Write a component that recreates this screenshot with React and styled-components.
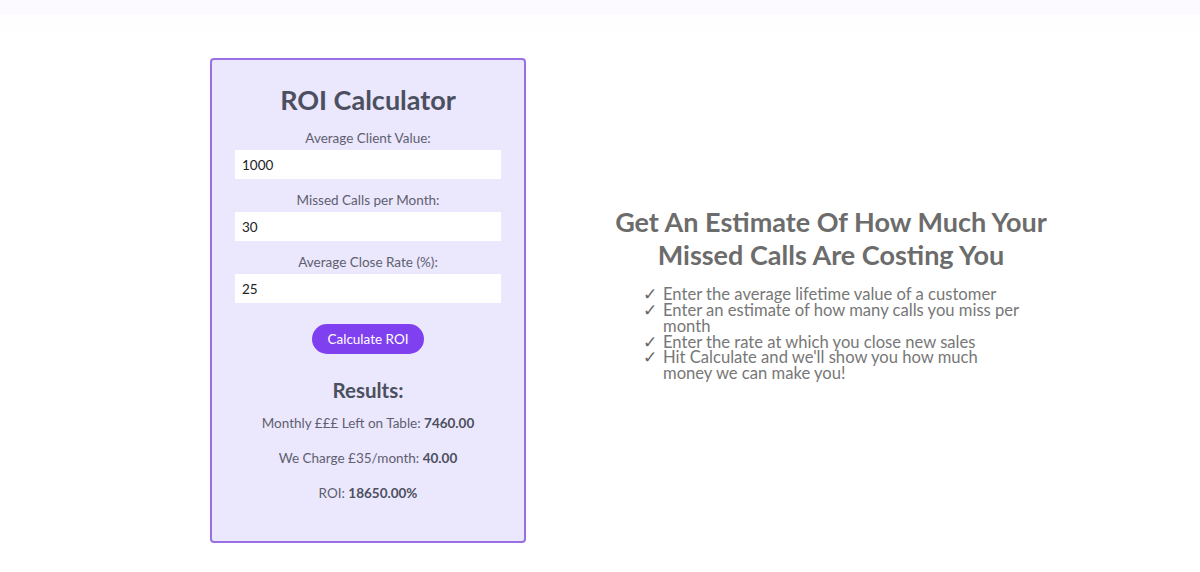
import React, { useState } from "react";
import styled, { createGlobalStyle } from "styled-components";

const GlobalStyle = createGlobalStyle`
  body {
    margin: 0;
    background: #ffffff;
    font-family: Lato, "Noto Sans", sans-serif;
  }
`;

const TopBar = styled.div`
  height: 15px;
  background: #fcfaff;
`;

const Strip = styled.div`
  height: 15px;
  background: #fdfefd;
`;

const Row = styled.div`
  display: flex;
  align-items: center;
  padding: 28px 0 0 210px;
`;

const Card = styled.div`
  width: 312px;
  box-sizing: content-box;
  border: 2px solid #9a6fe6;
  border-radius: 4px;
  background: #ebe7fc;
  padding: 24px 0 40px;
  display: flex;
  flex-direction: column;
  align-items: center;
`;

const Title = styled.h1`
  margin: 0 0 15px;
  font-size: 27px;
  line-height: 31px;
  font-weight: 700;
  color: #4b5060;
`;

const Label = styled.label`
  font-size: 13.5px;
  line-height: 16px;
  color: #5e6070;
  margin: ${(p) => (p.$first ? "0" : "13px")} 0 4px;
`;

const Input = styled.input`
  width: 266px;
  height: 29px;
  box-sizing: border-box;
  border: none;
  outline: none;
  background: #ffffff;
  padding: 0 7px;
  font-family: inherit;
  font-size: 13.5px;
  color: #222222;
`;

const Button = styled.button`
  margin-top: 21px;
  width: 112px;
  height: 30px;
  border: none;
  border-radius: 15px;
  background: #7f41ef;
  color: #ffffff;
  font-family: inherit;
  font-size: 13.5px;
  cursor: pointer;
`;

const ResultsTitle = styled.h2`
  margin: 24px 0 13px;
  font-size: 20.5px;
  line-height: 24px;
  font-weight: 700;
  color: #4b5060;
`;

const ResultLine = styled.p`
  margin: 0 0 19px;
  font-size: 13.5px;
  line-height: 16px;
  color: #5e6070;

  &:last-child {
    margin-bottom: 0;
  }

  b {
    font-weight: 700;
    color: #4b5060;
  }
`;

const Info = styled.div`
  margin-left: 75px;
  margin-top: -14px;
  width: 460px;
  display: flex;
  flex-direction: column;
`;

const InfoTitle = styled.h2`
  margin: 0 0 16px;
  text-align: center;
  font-size: 27px;
  line-height: 33px;
  font-weight: 700;
  color: #6c6c6c;
`;

const List = styled.ul`
  list-style: none;
  margin: 0 0 0 42px;
  padding: 0;
  width: 386px;
`;

const Item = styled.li`
  display: flex;
  font-size: 16.6px;
  line-height: 15.8px;
  color: #777777;
`;

const Check = styled.span`
  flex: 0 0 20px;
  font-family: "DejaVu Sans", sans-serif;
  font-size: 17px;
  font-weight: 700;
  color: #666666;
`;

const steps = [
  "Enter the average lifetime value of a customer",
  "Enter an estimate of how many calls you miss per month",
  "Enter the rate at which you close new sales",
  "Hit Calculate and we'll show you how much money we can make you!",
];

export default function App() {
  const [value, setValue] = useState("1000");
  const [calls, setCalls] = useState("30");
  const [rate, setRate] = useState("25");

  return (
    <>
      <GlobalStyle />
      <TopBar />
      <Strip />
      <Row>
        <Card>
          <Title>ROI Calculator</Title>
          <Label $first>Average Client Value:</Label>
          <Input value={value} onChange={(e) => setValue(e.target.value)} />
          <Label>Missed Calls per Month:</Label>
          <Input value={calls} onChange={(e) => setCalls(e.target.value)} />
          <Label>Average Close Rate (%):</Label>
          <Input value={rate} onChange={(e) => setRate(e.target.value)} />
          <Button>Calculate ROI</Button>
          <ResultsTitle>Results:</ResultsTitle>
          <ResultLine>
            Monthly £££ Left on Table: <b>7460.00</b>
          </ResultLine>
          <ResultLine>
            We Charge £35/month: <b>40.00</b>
          </ResultLine>
          <ResultLine>
            ROI: <b>18650.00%</b>
          </ResultLine>
        </Card>
        <Info>
          <InfoTitle>
            Get An Estimate Of How Much Your
            <br />
            Missed Calls Are Costing You
          </InfoTitle>
          <List>
            {steps.map((s) => (
              <Item key={s}>
                <Check>✓</Check>
                <span>{s}</span>
              </Item>
            ))}
          </List>
        </Info>
      </Row>
    </>
  );
}
